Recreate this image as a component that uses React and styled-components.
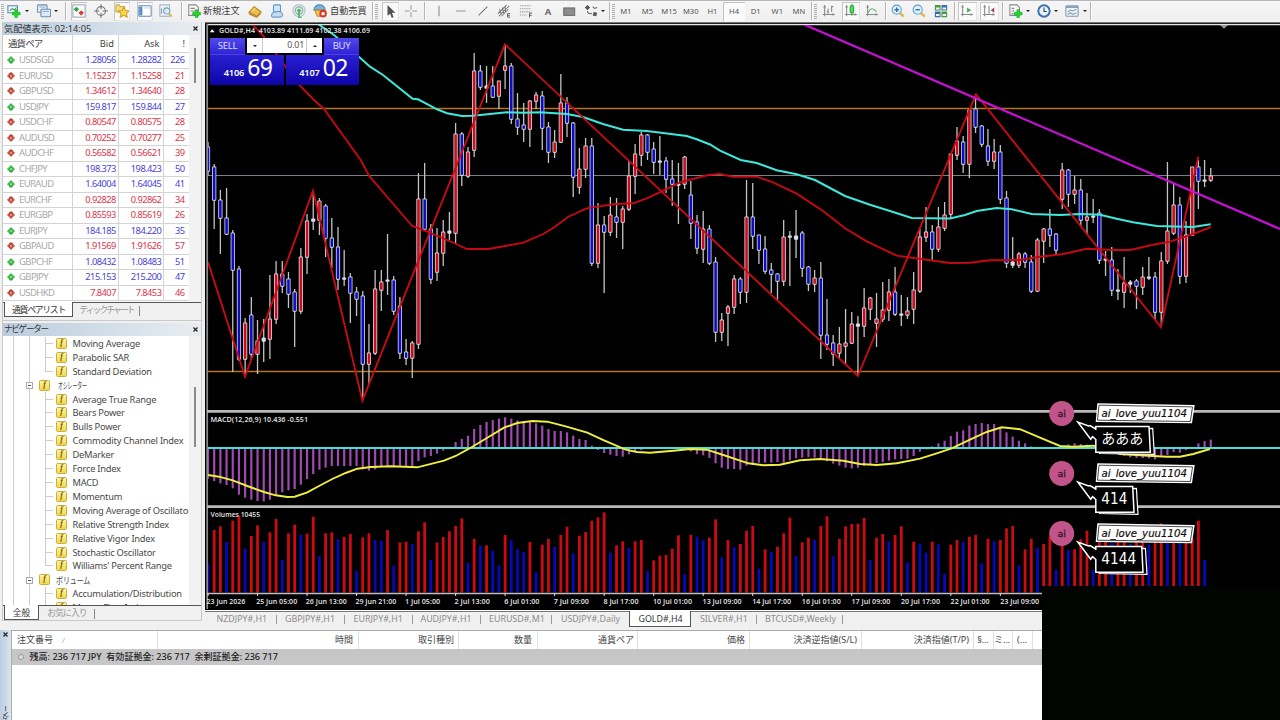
import React from "react";
import styled, { createGlobalStyle, css } from "styled-components";

const Global = createGlobalStyle`
  *{box-sizing:border-box}
  html,body{margin:0;padding:0;background:#000}
  body{width:1280px;height:720px;overflow:hidden;font-family:"Noto Sans","Noto Sans CJK JP",sans-serif;font-size:9px;color:#444}
`;

/* ---------- page frame ---------- */
const Page = styled.div`
  width: 1280px; height: 720px; display: flex; flex-direction: column;
  background: #f0f0f0; position: relative; overflow: hidden; white-space: nowrap;
`;
const Middle = styled.div`display: flex; height: 608px; flex: none;`;

/* ---------- toolbar ---------- */
const Bar = styled.div`
  display: flex; align-items: center; height: 22px; flex: none;
  background: linear-gradient(#b9b6b9 0 1px, #f6f6f6 1px, #efefef); 
`;
const Cell = styled.div`
  flex: none; width: ${(p) => p.$w || 16}px; margin-left: ${(p) => p.$ml || 0}px; height: 19px;
  display: flex; align-items: center; justify-content: center;
  ${(p) => p.$on && css`background: #fafafa; border: 1px solid #c6c6c6; border-right-color: #e4e4e4; border-bottom-color: #e4e4e4;`}
`;
const Sep = styled.i`
  flex: none; width: 2px; height: 18px; margin-left: ${(p) => p.$ml}px;
  border-left: 1px solid #b5b5b5; border-right: 1px solid #fff;
`;
const Grip = styled.i`
  flex: none; width: 3px; height: 15px; margin: 0 ${(p) => p.$mr || 0}px 0 ${(p) => p.$ml}px;
  background: repeating-linear-gradient(#b4b4b4 0 1px, #ededed 1px 2px);
`;
const BarText = styled.span`
  flex: none; width: ${(p) => p.$w}px; margin-left: ${(p) => p.$ml}px; font-size: 9.2px; color: #3c3c3c; line-height: 20px;
`;
const Period = styled.span`
  flex: none; width: 21.65px; height: 19px; line-height: 19px; text-align: center; font-size: 7.6px; color: #555;
  ${(p) => p.$on && css`background: #fafafa; box-shadow: inset 1px 1px #c2c2c2;`}
`;
const Tri = styled.i`
  border: 2.2px solid transparent; border-top: 2.8px solid #222; border-bottom: 0;
`;

const Icon = ({ children, s = 14 }) => (
  <svg width={s} height={s} viewBox="0 0 16 16" fill="none" strokeWidth="1.2">{children}</svg>
);
const Plus = ({ x = 7, y = 7 }) => (
  <path transform={`translate(${x} ${y})`} d="M3 0h3v3h3v3H6v3H3V6H0V3h3z" fill="#22d62c" stroke="#1ba524" strokeWidth=".6" />
);
const axes = <path d="M3 2v12M1 12h13M2 4l1-2 1 2M12 11l2 1-2 1" stroke="#8a8a8a" />;
const icons = {
  newchart: <><rect x="1" y="2" width="11" height="8" fill="#eaf6ff" stroke="#5e8bb5" /><path d="M3 8l3-3 2 2 3-3" stroke="#4d9a50" /><Plus x={6} y={6.5} /></>,
  windows: <><rect x="0.5" y="1" width="11" height="8.500" rx="1" fill="#e8f0f8" stroke="#6b8cab" /><rect x="4.500" y="6" width="11" height="8.500" rx="1" fill="#dbe9f6" stroke="#6b8cab" /><path d="M2.500 3.500h7M6.500 8.500h7" stroke="#8fb0ce" /></>,
  watch: <><rect x="1" y="1" width="14" height="14" fill="#fff" stroke="#95aab8" /><path d="M5 3l3 3-3 3-3-3z" fill="#2fa03a" /><path d="M10.500 7l3.200 3-3.200 3.500-3.200-3.500z" fill="#d8442d" /></>,
  target: <><circle cx="8" cy="8" r="5" stroke="#777" /><path d="M8 0v6M8 10v6M0 8h6M10 8h6" stroke="#777" /></>,
  star: <><path d="M1 4V1h4l1 2h5v6H1z" fill="#f5dd7e" stroke="#cfae48" /><path d="M10 4l2 3.500 4 .5-3 3 1 4-4-2-4 2 1-4-3-3 4-.5z" fill="#fbd848" stroke="#c99d28" /></>,
  panel: <><rect x="1" y="2" width="14" height="12" rx=".8" fill="#fff" stroke="#5f8cb8" /><path d="M1.500 3h3.500v10H1.500z" fill="#5a8dc0" /><path d="M7 4.500h7" stroke="#c2d5e5" /></>,
  tester: <><rect x="1" y="1" width="11" height="13" fill="#f1f6fa" stroke="#9db2c4" /><path d="M3 11V5m3 5V4m3 6V3" stroke="#7d9ab0" /><circle cx="9" cy="8" r="3.500" fill="#d8ecfa" stroke="#7f9fbc" /><path d="M11.500 11l3 3.500" stroke="#e0b64a" strokeWidth="2.200" /></>,
  order: <><path d="M2 1h8l3 3v9H2z" fill="#fafafa" stroke="#888" /><path d="M4 5h5M4 8h5" stroke="#888" /><Plus x={6.500} y={6.500} /></>,
  book: <><path d="M1 9.500l6-6.500 8 6-5 5z" fill="#ebc04a" stroke="#b3872a" /><path d="M1 10l9 4 5-5v2l-5 5-9-4z" fill="#bd8c2b" /><path d="M5 8l3-3" stroke="#f8e39b" /></>,
  vps: <><rect x="4" y="1" width="8" height="8" rx="1" fill="#cfe5f8" stroke="#5b97cc" /><path d="M2 12c1-4 4-2 5-3 3-1 6 0 7 2 1 3-1 4-3 4H4c-2 0-3-1-2-3z" fill="#c5dcf1" stroke="#6a9bc8" /></>,
  radio: <><circle cx="8" cy="7.500" r="7" fill="#dde6ea" stroke="#b5c5cd" /><circle cx="8" cy="7.500" r="4.200" stroke="#86b59b" /><circle cx="8" cy="7.500" r="1.800" fill="#31a44a" /><path d="M8 8v7.500h3" stroke="#4cba60" strokeWidth="2" /></>,
  auto: <><path d="M1 7c0-8 13-8 13 0z" fill="#7bb2de" stroke="#4f87b8" /><path d="M2 7h11l-2 7H5z" fill="#f1ca52" stroke="#b7902d" /><circle cx="11.500" cy="11" r="4.300" fill="#d9362a" /><rect x="9.800" y="9.400" width="3.400" height="3.400" fill="#fff" /></>,
  cursor: <path d="M4 1l9 9H9l2 5-2.200.8L7 11l-3 2.500z" fill="#505050" />,
  cross: <path d="M8 1v5.500M8 9.500V15M1 8h5.500M9.500 8H15" stroke="#999" />,
  vline: <path d="M8 2v12" stroke="#888" />,
  hline: <path d="M2.500 8h11" stroke="#999" />,
  diag: <path d="M3 13L13 3" stroke="#777" />,
  channel: <><path d="M1 11L11 1M2 14L14 2M5 14l8-8M3 6l2 6M6 4l2 7M9 3l1 6" stroke="#777" /><path d="M15 11h-3v4h3M12 13h2.500" stroke="#555" strokeWidth="1" /></>,
  fib: <><path d="M1 2h13M1 5.500h13M1 9h13M1 12.500h8" stroke="#999" strokeDasharray="1.500 1" /><path d="M15 10.500h-3v5M12 13h2.500" stroke="#555" strokeWidth="1" /></>,
  rect: <rect x="2" y="4.500" width="12.500" height="8.500" fill="#8c8c8c" stroke="#6c6c6c" />,
  arrows: <><path d="M4 1l3 3-3 3-3-3zM11 9l4 1-1 4-4-1z" fill="#555" /><path d="M4 8c0 3 2 3 5 3M10 3l2 2 3-1" stroke="#666" /></>,
  bars: <>{axes}<path d="M7 5v6M7 9H5.500M11 2v7M11 3h2" stroke="#888" /></>,
  candles: <>{axes}<path d="M9 0v13" stroke="#2d9a3a" /><rect x="7" y="2" width="4" height="8" rx="1" fill="#4ddc5c" stroke="#2aa838" /></>,
  line: <>{axes}<path d="M3 11c3-7 6-7 10-2" stroke="#6db07a" /></>,
  zin: <><path d="M10 10l4.500 4.500" stroke="#e2ba50" strokeWidth="3" /><circle cx="6.500" cy="6.500" r="5.200" fill="#def0fc" stroke="#5d9ccf" /><path d="M6.500 4v5M4 6.500h5" stroke="#2e6fae" strokeWidth="1.600" /></>,
  zout: <><path d="M10 10l4.500 4.500" stroke="#e2ba50" strokeWidth="3" /><circle cx="6.500" cy="6.500" r="5.200" fill="#def0fc" stroke="#5d9ccf" /><path d="M4 6.500h5" stroke="#2e6fae" strokeWidth="1.600" /></>,
  tile: <><path d="M1 1h6.500v6.500H1zM8.500 8.500H15V15H8.500z" fill="#4c9a3b" /><path d="M8.500 1H15v6.500H8.500zM1 8.500h6.500V15H1z" fill="#3b6fb0" /><path d="M2.300 4h4v2.300h-4zM9.800 4h4v2.300h-4zM2.300 11.500h4v2.300h-4zM9.800 11.500h4v2.300h-4z" fill="#eaf4fb" /></>,
  scroll: <>{axes}<path d="M8 4l5 3-5 3z" fill="#4eae66" /></>,
  shift: <>{axes}<path d="M8 2v9" stroke="#888" /><path d="M14 4v6l-4-3z" fill="#a84848" /></>,
  indic: <><path d="M1 1h8l3 3v9H1z" fill="#fafafa" stroke="#888" /><path d="M3 5h3M3 8h3M3 11h2" stroke="#888" /><Plus x={6} y={6.500} /></>,
  clock: <><circle cx="8" cy="8" r="6.500" fill="#e8f3fc" stroke="#3a70ad" strokeWidth="2.200" /><path d="M8 4v4.500h3" stroke="#345" /></>,
  tmpl: <><rect x="1" y="2" width="14" height="12" rx="1" fill="#eff5fa" stroke="#7c9cba" /><path d="M1 3.500h14" stroke="#7c9cba" strokeWidth="2" /><path d="M3 9l3-2 3 1 4-2M3 12l3-2 3 2 4-2" stroke="#89a" /></>,
};

const tools = [
  ["g", 1, 1], ["newchart", 1], ["v", 1], ["windows", 5], ["v", 0], ["s", 5],
  ["watch", 4, 16, 1], ["target", 6], ["star", 5, 16, 1], ["panel", 7, 16, 1], ["tester", 5], ["s", 7],
  ["order", 3], ["t", 1, 38, "新規注文"], ["book", 6], ["vps", 6], ["radio", 6], ["auto", 5], ["t", 2, 37, "自動売買"],
  ["s", 5], ["g", 1, 1], ["cursor", 3, 17, 1], ["cross", 4], ["s", 5], ["vline", 5], ["hline", 6], ["diag", 6],
  ["channel", 5], ["fib", 6], ["A", 6], ["rect", 5], ["arrows", 6], ["v", 0], ["s", 2], ["g", 1, 0],
  ["p"], ["s", 1], ["g", 1, 1], ["bars", 3], ["candles", 5, 18, 1], ["line", 4], ["s", 5], ["zin", 3], ["zout", 5],
  ["tile", 6], ["s", 5], ["scroll", 2, 19, 1], ["shift", 3, 19, 1], ["s", 3], ["indic", 4], ["v", 0], ["clock", 4],
  ["v", 0], ["tmpl", 4], ["v", 1], ["s", 1],
];
const LetterA = styled.b`font-size: 9.500px; color: #6c6c6c; margin-top: 1px;`;

const Toolbar = () => (
  <Bar>
    {tools.map(([k, ml, w, x], i) => {
      if (k === "g") return <Grip key={i} $ml={ml} $mr={w} />;
      if (k === "s") return <Sep key={i} $ml={ml} />;
      if (k === "v") return <Cell key={i} $ml={ml} $w={8}><Tri /></Cell>;
      if (k === "t") return <BarText key={i} $ml={ml} $w={w}>{x}</BarText>;
      if (k === "A") return <Cell key={i} $ml={ml}><LetterA>A</LetterA></Cell>;
      if (k === "p") return ["M1", "M5", "M15", "M30", "H1", "H4", "D1", "W1", "MN"].map((t) => <Period key={t} $on={t === "H4"}>{t}</Period>);
      return <Cell key={i} $ml={ml} $w={w} $on={x}><Icon>{icons[k]}</Icon></Cell>;
    })}
  </Bar>
);

/* ---------- left column ---------- */
const Left = styled.div`width: 205px; flex: none; display: flex; flex-direction: column; padding-left: 2px;`;
const Dock = styled.div`width: 200px; border: 1px solid #c9c9c9; border-top: 0; height: ${(p) => p.$h}px; display: flex; flex-direction: column;`;
const Title = styled.div`
  height: 13px; flex: none; display: flex; justify-content: space-between; align-items: center; padding: 0 3px 0 1px;
  background: linear-gradient(90deg, #bccddd, #d5e0ea 60%, #e9edf1); font-size: ${(p) => p.$fs}px; letter-spacing: ${(p) => p.$ls || 0}px; color: #333; line-height: 13px;
`;
const Body = styled.div`display: flex; flex: none; height: ${(p) => p.$h}px; overflow: hidden; border-bottom: 1px solid #555;`;
const Track = styled.div`width: 12px; background: #f2f2f2; padding: ${(p) => p.$top}px 0 0 5px;`;
const Thumb = styled.div`width: 1.500px; height: ${(p) => p.$h}px; background: #8c8c8c;`;
const Table = styled.div`width: 186px; flex: none; background: #fff;`;
const Row = styled.div`
  display: grid; grid-template-columns: 70px 45.500px 45.500px 25px; height: ${(p) => (p.$head ? 18 : 15.5)}px;
  border-bottom: 1px solid #d4d4d4; line-height: ${(p) => (p.$head ? 17 : 14.5)}px; color: ${(p) => p.$c || "#444"};
`;
const Sym = styled.span`
  border-right: 1px solid #d4d4d4; padding-left: ${(p) => (p.$head ? 5 : 4)}px; display: flex; align-items: center; gap: 4px;
  color: ${(p) => (p.$head ? "#444" : "#a9a9a9")}; font-size: 9.500px; letter-spacing: ${(p) => (p.$head ? -0.9 : -0.6)}px;
`;
const Num = styled.span`
  border-right: 1px solid ${(p) => (p.$last ? "transparent" : "#d4d4d4")}; text-align: right; font-size: 9.300px; letter-spacing: ${(p) => (p.$h ? 0 : -0.55)}px;
  padding-right: ${(p) => (p.$last ? 3.5 : p.$h ? 3.5 : 1.6)}px;
`;
const Tabs = styled.div`display: flex; height: 16px; font-size: ${(p) => p.$fs}px; line-height: 14px; color: #999; padding-left: 1px;`;
const Tab = styled.span`
  width: ${(p) => p.$w}px; text-align: center; height: 15px; letter-spacing: ${(p) => p.$ls}px;
  ${(p) => p.$on ? css`background: #fff; color: #333; border: 1px solid #555; border-top: 0; margin-top: -1px; padding-top: 1px;` : css`background: linear-gradient(#888, #888) right 3px / 1px 10px no-repeat;`}
`;

const quotes = [
  ["USDSGD", "1.28056", "1.28282", "226", 1], ["EURUSD", "1.15237", "1.15258", "21", 0], ["GBPUSD", "1.34612", "1.34640", "28", 0],
  ["USDJPY", "159.817", "159.844", "27", 1], ["USDCHF", "0.80547", "0.80575", "28", 0], ["AUDUSD", "0.70252", "0.70277", "25", 0],
  ["AUDCHF", "0.56582", "0.56621", "39", 0], ["CHFJPY", "198.373", "198.423", "50", 1], ["EURAUD", "1.64004", "1.64045", "41", 1],
  ["EURCHF", "0.92828", "0.92862", "34", 0], ["EURGBP", "0.85593", "0.85619", "26", 0], ["EURJPY", "184.185", "184.220", "35", 1],
  ["GBPAUD", "1.91569", "1.91626", "57", 0], ["GBPCHF", "1.08432", "1.08483", "51", 1], ["GBPJPY", "215.153", "215.200", "47", 1],
  ["USDHKD", "7.8407", "7.8453", "46", 0],
];
const Dir = ({ up }) => (
  <svg width="8" height="8" viewBox="0 0 8 8">
    <path d={up ? "M4 .4L7.700 4.300 6 5v1.200L4 7.600 2 6.200V5L.3 4.300z" : "M4 7.600L.3 3.700 2 3V1.800L4 .4l2 1.400V3l1.700.7z"} fill={up ? "#35bd40" : "#cf4a35"} stroke={up ? "#2f9a3a" : "#a03a2c"} strokeWidth=".6" />
    <path d="M3.200 4h1.600" stroke="#fff" strokeWidth="1.200" />
  </svg>
);
const X = () => <svg width="5" height="5" viewBox="0 0 5 5"><path d="M.5.5l4 4M4.500.5l-4 4" stroke="#222" strokeWidth="1.200" /></svg>;

const Tree = styled.div`width: 186px; flex: none; background: #fff; overflow: hidden; display: flex; flex-direction: column; padding-top: .5px;
  background-image: linear-gradient(#d0d0d0, #d0d0d0), linear-gradient(#d0d0d0, #d0d0d0); background-size: 1px 100%; background-position: 10px 0, 26px 0; background-repeat: no-repeat;`;
const Leaf = styled.div`
  height: 13.920px; flex: none; display: flex; align-items: center; padding-left: ${(p) => (p.$g ? 23 : 42)}px; font-size: 9.300px; color: #484848; letter-spacing: -.23px;
`;
const Elbow = styled.i`
  width: 8px; height: 13.920px; margin-right: 3px; flex: none;
  background: linear-gradient(#ccc, #ccc) 0 0 / 1px ${(p) => (p.$end ? "50%" : "100%")} no-repeat, linear-gradient(#ccc, #ccc) 0 50% / 8px 1px no-repeat;
`;
const Fn = styled.i`
  width: 11px; height: 11px; flex: none; margin-right: ${(p) => p.$mr || 5.5}px; border: 1px solid #c9ae3d; border-radius: 1.500px; background: linear-gradient(#fff49c, #f0d84c);
  font: italic bold 7.500px/8px "Liberation Serif", serif; color: #6d5410; text-align: center;
`;
const Expand = styled.i`
  width: 7px; height: 7px; margin: 1px 6px 0 0; border: 1px solid #aaa; flex: none;
  background: linear-gradient(#555, #555) center / 3px 1px no-repeat #fff;
`;
const Kana = styled.span`display: inline-block; transform-origin: 0 50%; transform: scaleX(${(p) => p.$k});`;

const tree = ["Moving Average", "Parabolic SAR", "*Standard Deviation", "#オシレーター", "Average True Range", "Bears Power", "Bulls Power",
  "Commodity Channel Index", "DeMarker", "Force Index", "MACD", "Momentum", "Moving Average of Oscillator", "Relative Strength Index",
  "Relative Vigor Index", "Stochastic Oscillator", "*Williams' Percent Range", "#ボリューム", "Accumulation/Distribution", "Money Flow Index"];

const Gap = styled.div`height: 2px; flex: none; background: #f0f0f0;`;

const Sidebar = () => (
  <Left>
    <Dock $h={299}>
      <Title $fs={9.2}>気配値表示: 02:14:05<X /></Title>
      <Body $h={268}>
        <Table>
          <Row $head><Sym $head>通貨ペア</Sym><Num $h>Bid</Num><Num $h>Ask</Num><Num $last>!</Num></Row>
          {quotes.map(([s, b, a, d, up]) => (
            <Row key={s} $c={up ? "#4a3fd8" : "#dc3448"}><Sym><Dir up={up} />{s}</Sym><Num>{b}</Num><Num>{a}</Num><Num $last>{d}</Num></Row>
          ))}
        </Table>
        <Track $top={13}><Thumb $h={35} /></Track>
      </Body>
      <Tabs $fs={8.9}><Tab $w={69} $on $ls={-1.3}>通貨ペアリスト</Tab><Tab $w={67} $ls={-2}>ティックチャート</Tab></Tabs>
    </Dock>
    <Dock $h={300}>
      <Gap />
      <Title $fs={8.6} $ls={-1.3}>ナビゲーター<X /></Title>
      <Body $h={270}>
        <Tree>
          {tree.map((t) => t[0] === "#" ? (
            <Leaf key={t} $g><Expand /><Fn $mr={t[1] === "オ" ? 8 : 6}>f</Fn><Kana $k={t[1] === "オ" ? 0.53 : 0.76}>{t.slice(1)}</Kana></Leaf>
          ) : (
            <Leaf key={t}><Elbow $end={t[0] === "*"} /><Fn>f</Fn>{t.replace("*", "")}</Leaf>
          ))}
        </Tree>
        <Track $top={51}><Thumb $h={60} /></Track>
      </Body>
      <Tabs $fs={8.8}><Tab $w={35} $on $ls={0}>全般</Tab><Tab $w={56} $ls={-0.9}>お気に入り</Tab></Tabs>
    </Dock>
  </Left>
);

/* ---------- chart ---------- */
const STEP = 6.19, X0 = 208;
const at = (i) => X0 + i * STEP;

// high, body top, body bottom, low, kind (b: falling, r: rising, w: flat)
const candles = `142 147 171 175 b,164 167 200 228 b,190 200 218 253 b,188 218 234 234 b,230 233 270 371 b,266 269 359 360 b,318 323 359 376 r,297 315 354 359 b,320 341 354 373 r,319 338 341 361 w,275 319 339 358 r,261 274 319 323 r,261 274 286 292 b,272 279 294 307 b,289 292 311 346 b,248 257 311 313 r,214 221 257 273 r,192 219 221 229 w,198 201 220 234 r,204 206 238 256 b,218 238 247 267 b,227 247 279 289 b,250 278 279 285 w,273 277 293 322 b,287 292 299 315 b,291 296 364 397 b,324 353 364 383 r,270 289 353 354 r,270 282 290 310 r,234 280 281 294 w,276 280 311 314 b,297 306 353 358 b,339 352 358 364 b,341 343 358 377 r,173 199 344 348 r,163 199 229 230 b,224 229 279 283 b,228 253 272 280 r,220 232 253 265 r,212 231 233 239 w,123 134 233 243 r,132 134 175 185 b,147 152 176 177 r,53 71 150 156 r,65 71 87 89 b,66 86 88 102 w,66 86 97 97 b,81 81 96 108 r,45 66 70 88 r,63 66 119 123 b,93 119 127 134 b,103 125 129 141 b,100 101 129 146 r,92 95 101 108 r,91 96 128 149 b,122 127 152 162 b,130 142 152 157 r,74 103 142 142 r,97 103 123 136 b,122 123 177 196 b,148 169 187 193 r,138 146 169 177 r,138 146 263 265 b,203 225 263 267 r,216 225 232 292 b,197 215 232 235 r,198 217 222 237 b,206 209 222 248 r,161 176 209 210 r,144 154 176 193 r,132 135 155 165 r,134 135 152 159 b,142 149 162 173 b,136 161 162 174 w,157 161 179 192 b,160 179 184 205 b,163 184 185 223 w,156 157 184 188 r,181 195 223 238 b,215 222 248 253 b,211 229 249 262 r,225 229 263 264 b,257 262 332 341 b,313 320 332 340 r,305 307 313 345 r,275 279 307 313 r,277 279 292 303 b,180 217 292 302 r,183 217 236 248 b,235 235 250 263 b,236 249 271 273 b,263 270 274 292 b,273 274 281 299 b,220 237 281 285 r,231 236 237 285 w,210 236 239 257 w,231 233 268 276 b,266 267 284 290 b,270 278 284 291 r,262 278 335 358 b,299 335 344 349 b,335 343 354 365 b,327 344 353 358 r,309 343 346 363 r,312 324 343 343 r,316 324 326 375 w,288 308 326 336 r,297 298 309 319 r,293 319 323 346 r,282 310 319 321 r,279 292 310 320 r,267 292 314 315 b,295 314 315 325 w,297 311 315 318 r,272 290 309 323 r,229 237 291 292 r,207 232 237 241 r,225 232 249 260 b,207 227 249 251 r,202 215 228 230 r,153 154 214 218 r,127 141 155 159 r,136 142 164 172 b,109 110 164 177 r,95 109 127 132 b,125 126 144 146 b,129 146 161 165 b,139 152 161 168 r,145 152 199 203 b,191 198 263 267 b,237 262 265 267 w,252 254 265 267 r,252 254 262 267 b,255 262 291 292 b,238 240 291 291 r,228 229 241 262 r,209 229 235 246 b,233 234 250 254 b,163 170 199 208 r,169 170 194 206 b,176 190 194 203 r,179 190 220 225 b,193 217 220 233 r,199 216 217 222 w,209 213 260 263 b,251 259 260 275 w,247 260 290 295 b,269 290 291 299 w,257 283 292 307 r,280 282 284 292 w,279 281 286 308 b,267 277 287 294 r,257 277 278 279 w,272 277 312 319 b,252 261 312 324 r,162 231 261 263 r,184 205 233 234 r,197 205 276 283 b,221 235 276 282 r,167 167 235 235 r,160 167 181 208 b,160 180 181 186 w,168 176 180 181 r`
  .split(",").map((s) => { const p = s.split(" "); return [+p[0], +p[1], +p[2], +p[3], p[4]]; });

// bar tops in thirds of a pixel below y = 400; negative marks a falling bar
const volumes = [-492, 390, 379, -426, 362, 346, -446, 408, 376, -425, 397, 357, -479, 400, 374, -405, 401, 350, -469, 400, 397, -418, 411, 402, -513, 412, 400, -420, -422, 390, -497, 427, 425, -432, 394, 367, -480, 427, 411, 394, 378, 355, -488, 417, -437, 436, -452, -496, 405, -421, -448, -456, 426, -517, 434, 417, -440, 405, 380, -460, 407, 396, 362, 352, 337, -458, 436, 424, -444, 424, 420, -514, 481, 467, 465, 446, 406, -522, 405, -410, -421, 413, 358, -472, 420, -442, 432, 392, 378, -506, 448, -455, 440, 400, 353, -468, 427, 413, -420, 378, 349, -469, 417, 379, 372, 371, 354, -480, 413, 402, -424, 405, 379, -488, 425, -431, -458, 425, -433, -521, 434, 420, -426, 410, 405, -490, 416, -424, 420, 385, 378, -496, 448, 417, -443, 432, 410, -510, 422, -450, 448, 418, 392, -510, 425, 425, -430, 425, 425, -432, 425, 425, -433, 412, 370, -425, 420, -425, 420, 415, 362, -480];

const macd = [236, 243, 250, 255, 265, 284, 293, 299, 303, 304, 299, 288, 277, 271, 267, 254, 237, 222, 209, 203, 198, 198, 198, 198, 198, 208, 212, 208, 200, 200, 200, 200, 201, 200, 183, 172, 168, 161, 152, 146, 126, 117, 107, 87, 75, 66, 60, 56, 52, 56, 61, 63, 66, 70, 77, 87, 93, 93, 97, 107, 117, 120, 137, 150, 159, 164, 168, 170, 163, 156, 150, 147, 146, 146, 146, 146, 147, 148, 154, 162, 166, 174, 190, 203, 207, 207, 209, 197, 195, 188, 188, 188, 186, 188, 181, 175, 173, 171, 173, 180, 184, 191, 197, 203, 205, 203, 198, 193, 189, 186, 182, 178, 177, 176, 168, 155, 148, 139, 130, 122, 108, 95, 91, 77, 72, 69, 72, 72, 84, 97, 110, 122, 130, 139, 143, 142, 143, 143, 138, 133, 130, 132, 134, 140, 144, 150, 158, 162, 167, 172, 174, 174, 175, 178, 167, 165, 156, 158, 150, 144, 130, 123, 119];

const signal = "208,475 219,476.7 232.7,480.3 247.3,486 264,492 275.7,495.3 287.3,497 294.7,496.7 307.3,492.3 319,486 332.3,479 345.7,473 357.3,468.7 370.7,467 390.7,466.3 417.3,467.3 444,460.7 455.7,456 469,448.7 487.3,437.7 504,427.7 517.3,423 532.3,421 547.3,421.7 565.7,426.3 587.3,432.7 604,440.3 625.7,449.7 636.7,452 650,452.7 673.3,450.7 690,449 706.7,449.7 723.3,455 748.3,463.3 763.3,465.3 780,464.7 800,460.3 820,459 843.3,460.7 860,464 876.7,465 896.7,463.3 920,458.7 936.7,453.3 951.7,448.3 970,439.7 986.7,432 1001.7,427.3 1020,429.2 1040,437.7 1060,446 1073,446.7 1093.3,445.7 1120,454 1153,456 1166.7,456.7 1180,456.7 1193.3,454 1210,449";
const slow = "318,24 334,35 360,57.7 370,66.7 383,75 396.7,86 412.7,98.7 418,99.3 430,105.7 437,109.3 447,113.3 462,116 473,115.7 506.7,112.3 523,112.7 540,112.3 566.7,114 583,117 603,124 623,129.7 646.7,131 663,133 686.7,136 696.7,139.3 710,144.5 720,150.7 740.7,160 756.7,163 776.7,170.3 796.7,174.3 815,180 845,196 870,204.7 890,211 911.7,218 950,218.5 965,215 976.7,211 996.7,208 1011.7,209.3 1031.7,214 1060,215 1080,214 1100,214.7 1116.7,218.7 1133,222.3 1156.7,226 1193,227 1210.7,224.3";
const fast = "253,25 263,35.7 297.7,83.3 314,100 324,109 344,136.7 360.7,160 369,175.7 390.7,201 412.3,226 427.3,231.7 454,243 466.7,249 488.3,249 506.7,245.7 523.3,242.7 543.3,234 555,226.7 568.3,216.7 586.7,208.3 613.3,204.3 633.3,203.3 646.7,198.3 663.3,190.7 680,182.3 708.3,175 720,174 733,176.7 756.7,176.7 773,182.3 796.7,193.7 823,211 845,228.3 866.7,241.3 896.7,255.7 930,260.3 950,263 970,262.8 990,260.3 1020,260 1040,256.7 1063.3,254 1086.7,248.7 1113.3,250 1130,250 1153.3,244.7 1170,241.7 1193.3,234 1210.7,227";
const zigzag = "208,262 245,376.7 313,190.7 362.4,400.7 505,44.3 857.8,376 976,94.3 1161,327.3 1198.3,156.7";
const dates = ["23 Jun 2026", "25 Jun 05:00", "26 Jun 13:00", "29 Jun 21:00", "1 Jul 05:00", "2 Jul 13:00", "6 Jul 01:00", "7 Jul 09:00", "8 Jul 17:00", "10 Jul 01:00", "13 Jul 09:00", "14 Jul 17:00", "16 Jul 01:00", "17 Jul 09:00", "20 Jul 17:00", "22 Jul 01:00", "23 Jul 09:00"];
const RED = "#cc0a12", BLUE = "#0808b8";

const Right = styled.div`width: 1075px; flex: none; display: flex; flex-direction: column;`;
const ChartBox = styled.div`height: 588px; flex: none; position: relative;`;
const Plot = styled.svg`display: block; text { font-family: "Noto Sans", sans-serif; font-weight: 600; fill: #dedede; font-size: 7.900px; }`;

const Chart = () => (
  <Plot width="1075" height="588" viewBox="205 22 1075 588">
    <defs><clipPath id="pane"><rect x="208" y="25" width="1072" height="585" /></clipPath></defs>
    <rect x="205" y="22" width="1075" height="588" fill="#000" />
    <path d="M205 22.500h1075" stroke="#888" />
    <path d="M205 23.300h1075" stroke="#2a2a2a" />
    <path d="M207 24.700h1073" stroke="#e4e4e4" strokeWidth="1.300" />
    <path d="M207.200 24v585" stroke="#8d8f92" strokeWidth="1.700" />
    <g clipPath="url(#pane)">
      <path d="M208 108.500h1072M208 371.500h1072" stroke="#b87318" strokeWidth="1.300" />
      <path d="M208 175.500h1072" stroke="#7b7e82" />
      {candles.map(([h, t, b, l, k], i) => {
        const x = at(i);
        return (
          <g key={i}>
            <path d={`M${x} ${h}V${l + 1}`} stroke="#c4c4c0" strokeWidth="1.300" />
            <rect x={x - 2.100} y={t - 0.5} width="4.200" height={Math.max(b - t + 1.200, 1.500)} rx=".9" fill="#dcdbea" />
            {k !== "w" && b - t > 1 && <rect x={x - 1.300} y={t + 0.400} width="2.600" height={Math.max(b - t - 0.600, 0.5)} fill={k === "b" ? "#0c0cc4" : "#cb0e1c"} />}
          </g>
        );
      })}
      <polyline points={slow} fill="none" stroke="#3de8dc" strokeWidth="2" />
      <polyline points={fast} fill="none" stroke="#c40814" strokeWidth="1.900" />
      <polyline points={zigzag} fill="none" stroke="#d00a14" strokeWidth="1.800" />
      <path d="M804 24.500L1280 229" stroke="#c80fd4" strokeWidth="2.200" />
      {macd.map((v, i) => <path key={i} d={`M${at(i)} 448V${400 + v / 3}`} stroke="#a149b2" strokeWidth="2.200" />)}
      <path d="M208 448h1072" stroke="#45dfd8" strokeWidth="1.900" />
      <polyline points={signal} fill="none" stroke="#efef3c" strokeWidth="1.900" />
      {volumes.map((v, i) => <path key={i} d={`M${at(i)} 592.500V${400 + Math.abs(v) / 3}`} stroke={v < 0 ? BLUE : RED} strokeWidth="2.800" />)}
    </g>
    <path d="M1220 25h8l-4 3.800z" fill="#9a9a9a" />
    <path d="M207 411.400h1073M207 506.600h1073" stroke="#b9b9b9" strokeWidth="2.600" />
    <path d="M207 593.500h1073" stroke="#bdbdbd" strokeWidth="1.400" />
    {dates.map((d, i) => (
      <g key={d}>
        <path d={`M${208 + i * 49.520} 593v3`} stroke="#ddd" />
        <text x={206.600 + i * 49.600} y="604.200" textLength={i === 0 ? 38.700 : d.length === 12 ? (i < 4 ? 41 : 39) : 35.200} lengthAdjust="spacingAndGlyphs">{d}</text>
      </g>
    ))}
    <path d="M209.700 32.300h5l-2.500-3z" fill="#fff" />
    <text x="219" y="33" textLength="151" lengthAdjust="spacingAndGlyphs">GOLD#,H4&#160; 4103.89 4111.69 4102.38 4106.69</text>
    <text x="210.600" y="422" textLength="97.500" lengthAdjust="spacingAndGlyphs">MACD(12,26,9) 10.436 -0.551</text>
    <text x="210.600" y="517" textLength="49.500" lengthAdjust="spacingAndGlyphs">Volumes 10455</text>
  </Plot>
);

/* one-click trading box */
const Deal = styled.div`
  position: absolute; left: 5px; top: 16px; width: 149px; height: 43px; color: #fff;
  display: grid; grid-template-columns: 35px 1fr 35px; grid-template-rows: 17px 26px;
`;
const DealHead = styled.div`
  background: linear-gradient(#5249ea, #2c22d6); font-size: 9.500px; letter-spacing: -.3px; text-align: center; line-height: 16.500px; color: #dcdcff;
  box-shadow: inset 0 -1px #4b43dc;
`;
const Spin = styled.div`
  background: #fff; margin: 0 2px 2px; display: grid; grid-template-columns: 15px 1fr 15px; align-items: center; color: #555;
  font-size: 8.800px; text-align: right; justify-items: center; letter-spacing: -.2px;
  > span { justify-self: stretch; border: solid #ccc; border-width: 0 1px; padding-right: 2px; line-height: 15px; }
`;
const Up = styled(Tri)`transform: rotate(180deg);`;
const Prices = styled.div`grid-column: 1 / 4; display: grid; grid-template-columns: 1fr 1fr; gap: 2px;`;
const Price = styled.div`
  background: linear-gradient(#2a1fd2, #0d04a8); display: flex; align-items: baseline; justify-content: flex-end; padding-right: ${(p) => p.$pr}px; gap: 3px;
  font-size: 9.200px; font-weight: 600; line-height: 25px; letter-spacing: -.15px;
  b { font-weight: 400; font-size: 23px; letter-spacing: -.5px; }
`;

/* viewer comments */
const Comment = styled.svg`position: absolute; left: 1048px; top: ${(p) => p.$y}px; overflow: visible; text { font-family: "DejaVu Sans", "Noto Sans CJK JP", sans-serif; }`;
const Message = ({ y, w, text, tw, fs = 15.6 }) => (
  <Comment $y={y} width="150" height="58">
    <circle cx="13.700" cy="13.500" r="12.500" fill="#c1558a" />
    <text x="9.400" y="17.300" fontSize="9.500" fill="#3c1230" stroke="#3c1230" strokeWidth=".3" textLength="8.500" lengthAdjust="spacingAndGlyphs">ai</text>
    <path d={`M51.500 29.700L${w + 3.700} 28.300L${w + 5.300} 54.300L51.500 53.500z`} fill="#000" stroke="#fff" strokeWidth="1.200" />
    <path d={`M47.800 29L42 25.500L40.500 26L29.800 22L42.700 39.300L44.600 36.700L47.800 39.500V52.200H${w + 1.300}L${w} 26.500H47.800V30`} fill="#000" stroke="#fff" strokeWidth="1.500" />
    <path d="M49.300 3.300L146.700 5L144 23.300L47.700 22z" fill="#fff" />
    <path d="M51 5.200L144.500 6.900L142.300 21.500L49.500 20.200z" fill="#fff" stroke="#333" strokeWidth=".9" />
    <text x="53.500" y="16.500" fontSize="9.700" fontStyle="italic" fill="#111" stroke="#111" strokeWidth=".2" textLength="85.500" lengthAdjust="spacingAndGlyphs">ai_love_yuu1104</text>
    <text x="53.300" y="43.600" fontSize={fs} fill="#fff" textLength={tw} lengthAdjust="spacingAndGlyphs">{text}</text>
  </Comment>
);

/* chart tabs + terminal */
const ChartTabs = styled.div`
  height: 20px; display: flex; border-top: 1px solid #fff; box-shadow: inset 0 1px #777; background: #f0f0f0; font-size: 8.900px; color: #8c8c8c; line-height: 16.500px;
`;
const ChartTab = styled.span`
  width: ${(p) => p.$w}px; padding-left: ${(p) => p.$pl}px; height: 16px; letter-spacing: -.02px;
  ${(p) => p.$on ? css`background: #fff; color: #333; border: 1px solid #555; border-top: 0;` : css`background: linear-gradient(#999, #999) right 4px / ${p.$bar === false ? 0 : 1}px 9px no-repeat;`}
`;
const tabs = [["NZDJPY#,H1", 72, 11.5], ["GBPJPY#,H1", 68, 8], ["EURJPY#,H1", 68, 8.5], ["AUDJPY#,H1", 68, 7.5], ["EURUSD#,M1", 71, 8], ["USDJPY#,Daily", 77, 9, false], ["GOLD#,H4", 62, 8.5, true], ["SILVER#,H1", 66, 9], ["BTCUSD#,Weekly", 86, 8]];

const Terminal = styled.div`display: flex; height: 90px; flex: none; background: #fff;`;
const Side = styled.div`
  width: 12px; flex: none; background: linear-gradient(90deg, #b9cde2, #dbe5ee); border-right: 1px solid #aaa; display: flex; flex-direction: column;
  align-items: center; justify-content: space-between; padding: 2px 0 0; overflow: hidden; font-size: 8px;
`;
const Rot = styled.span`writing-mode: vertical-rl; transform: rotate(180deg); height: 14px; overflow: hidden; line-height: 10px; color: #334;`;
const Grid = styled.div`flex: 1;`;
const Head = styled.div`display: flex; height: 19px; border-top: 1px solid #aaa; font-size: 9px; line-height: 17px; color: #444; background: #fff;`;
const Col = styled.span`width: ${(p) => p.$w}px; flex: none; border-right: 1px solid #e0e0e0; text-align: ${(p) => (p.$l ? "left" : "right")}; padding: 0 ${(p) => p.$pr || 4}px 0 ${(p) => (p.$l ? 5 : 0)}px; overflow: hidden;`;
const Sort = styled.i`color: #aaa; margin-left: 9px; font-size: 7px;`;
const Balance = styled.div`
  height: 15.500px; background: #c6c6c6; display: flex; align-items: center; gap: 6px; padding-left: 5.500px; font-size: 9.050px; color: #222; font-weight: 500;
`;
const Ring = styled.i`width: 6px; height: 6px; border: 1px solid #999; border-radius: 50%; background: #ddd;`;
const cols = [["時間", 201, 5], ["取引種別", 100, 4], ["数量", 79, 5], ["通貨ペア", 100, 3], ["価格", 112, 4], ["決済逆指値(S/L)", 112, 4], ["決済指値(T/P)", 112, 4], ["§...", 20, 4], ["ミ...", 19, 4], ["(...", 20, 5]];
const Cover = styled.div`position: absolute; left: 1042px; top: 586px; right: 0; bottom: 0; background: #020401;`;

export default function App() {
  return (
    <Page>
      <Global />
      <Toolbar />
      <Middle>
        <Sidebar />
        <Right>
          <ChartBox>
            <Chart />
            <Deal>
              <DealHead>SELL</DealHead>
              <Spin><Tri /><span>0.01</span><Up /></Spin>
              <DealHead>BUY</DealHead>
              <Prices>
                <Price $pr={11}>4106<b>69</b></Price>
                <Price $pr={11}>4107<b>02</b></Price>
              </Prices>
            </Deal>
          </ChartBox>
          <ChartTabs>
            {tabs.map(([t, w, pl, f]) => <ChartTab key={t} $w={w} $pl={pl} $on={f === true} $bar={f}>{t}</ChartTab>)}
          </ChartTabs>
        </Right>
      </Middle>
      <Terminal>
        <Side><X /><Rot>ターミナル</Rot></Side>
        <Grid>
          <Head>
            <Col $l $w={146}>注文番号<Sort>/</Sort></Col>
            {cols.map(([t, w, pr]) => <Col key={t} $w={w} $pr={pr}>{t}</Col>)}
          </Head>
          <Balance><Ring />残高: 236 717 JPY&#160; 有効証拠金: 236 717&#160; 余剰証拠金: 236 717</Balance>
        </Grid>
      </Terminal>
      <Cover />
      <Message y={400} w={101} text="あああ" tw={42} fs={14.5} />
      <Message y={460} w={84.700} text="414" tw={26} />
      <Message y={520} w={93.700} text="4144" tw={35} />
    </Page>
  );
}
